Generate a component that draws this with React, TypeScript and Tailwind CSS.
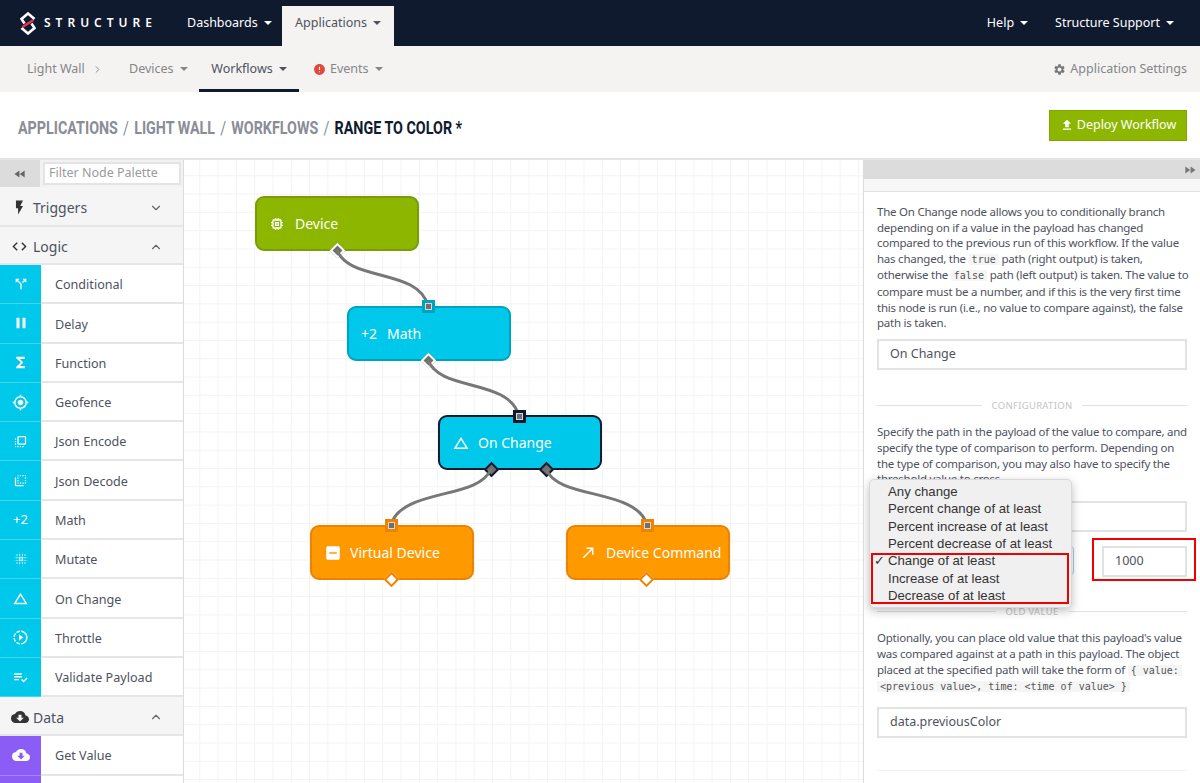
import { ChevronDown, ChevronUp, ChevronRight } from "lucide-react";
import {
  MdCallMade,
  MdCallSplit,
  MdChangeHistory,
  MdBlurOn,
  MdCloudDownload,
  MdCode,
  MdError,
  MdFastForward,
  MdFastRewind,
  MdFileUpload,
  MdFlashOn,
  MdFlipToBack,
  MdFlipToFront,
  MdFunctions,
  MdGpsFixed,
  MdIndeterminateCheckBox,
  MdMemory,
  MdPause,
  MdPlaylistAddCheck,
  MdSettings,
  MdSlowMotionVideo,
} from "react-icons/md";
import type { ReactNode } from "react";

const sans = "font-['Noto_Sans','Open_Sans',sans-serif]";

function Caret() {
  return <span className="ml-[6px] inline-block border-x-[4px] border-t-[4px] border-x-transparent border-t-current align-middle" />;
}

function Logo() {
  return (
    <svg width="16" height="23" viewBox="0 0 16 23" className="shrink-0" fill="none" strokeWidth="2.6">
      <path d="M4.5 11.5 L1.5 7 L8 1.5 L14.5 7" stroke="#fff" />
      <path d="M11.5 11.5 L14.5 16 L8 21.5 L1.5 16" stroke="#fff" />
      <path d="M2.5 15 L13.5 8" stroke="#e8334a" />
    </svg>
  );
}

const logicItems: { label: string; icon: ReactNode }[] = [
  { label: "Conditional", icon: <MdCallSplit size={16} /> },
  { label: "Delay", icon: <MdPause size={18} /> },
  { label: "Function", icon: <MdFunctions size={17} /> },
  { label: "Geofence", icon: <MdGpsFixed size={17} /> },
  { label: "Json Encode", icon: <MdFlipToFront size={15} /> },
  { label: "Json Decode", icon: <MdFlipToBack size={15} /> },
  { label: "Math", icon: <span className="text-[13px] text-white">+2</span> },
  { label: "Mutate", icon: <MdBlurOn size={16} /> },
  { label: "On Change", icon: <MdChangeHistory size={17} /> },
  { label: "Throttle", icon: <MdSlowMotionVideo size={17} /> },
  { label: "Validate Payload", icon: <MdPlaylistAddCheck size={17} /> },
];

function PaletteRow({ label, icon, color }: { label: string; icon: ReactNode; color: string }) {
  return (
    <div className="flex h-[39.3px] shrink-0 bg-white">
      <div className={`flex w-[41px] shrink-0 items-center justify-center border-b border-white/25 text-white ${color}`}>{icon}</div>
      <span className="flex flex-1 items-center border-b-2 border-[#e6e6e6] pl-[14px] pt-[4px] text-[12.6px] text-[#4e5260]">{label}</span>
    </div>
  );
}

function PaletteHeader({ label, icon, open, height }: { label: string; icon: ReactNode; open?: boolean; height: string }) {
  return (
    <div className={`flex shrink-0 items-center border-b-2 border-[#e6e6e6] bg-[#f5f5f5] pr-[20px] pt-[3px] text-[#4e5260] ${height}`}>
      <span className="flex w-[33px] justify-center pl-[6px] text-[#333]">{icon}</span>
      <span className="flex-1 text-[14px]">{label}</span>
      {open ? <ChevronUp size={14} className="text-[#666]" /> : <ChevronDown size={14} className="text-[#666]" />}
    </div>
  );
}

function Sidebar() {
  return (
    <aside className="flex w-[184px] shrink-0 flex-col overflow-hidden border-r border-[#dcdcdc] bg-white">
      <div className="flex h-[27px] shrink-0 bg-[#dcdcdc]">
        <div className="flex w-[40px] items-center justify-center text-[#666]"><MdFastRewind size={14} /></div>
        <div className="flex-1 bg-[#f2f2f2] py-[2px] pl-[3px] pr-[2px]">
          <div className="flex h-full items-center border-2 border-[#e4e4e4] bg-white pl-[4px] text-[12.5px] text-[#9a9a9a]">Filter Node Palette</div>
        </div>
      </div>
      <PaletteHeader label="Triggers" icon={<MdFlashOn size={17} />} height="h-[40px]" />
      <PaletteHeader label="Logic" icon={<MdCode size={17} />} height="h-[38px]" open />
      {logicItems.map((item) => (
        <PaletteRow key={item.label} {...item} color="bg-[#00c8ea]" />
      ))}
      <PaletteHeader label="Data" icon={<MdCloudDownload size={18} />} height="h-[39px]" open />
      <PaletteRow label="Get Value" icon={<MdCloudDownload size={18} />} color="bg-[#8b5cf6]" />
      <PaletteRow label="" icon={null} color="bg-[#8b5cf6]" />
    </aside>
  );
}

function InPort({ x, y, border }: { x: number; y: number; border: string }) {
  return (
    <div className={`absolute h-[13px] w-[13px] border-[3px] ${border}`} style={{ left: x - 6.5, top: y - 6.5 }}>
      <div className="h-full w-full border border-[#d8d8d8] bg-[#6f6f6f]" />
    </div>
  );
}

function OutPort({ x, y, border, fill }: { x: number; y: number; border: string; fill: string }) {
  return <div className={`absolute h-[11px] w-[11px] rotate-45 border-2 ${border} ${fill}`} style={{ left: x - 5.5, top: y - 5.5 }} />;
}

function Node({ x, y, label, icon, tone }: { x: number; y: number; label: string; icon: ReactNode; tone: string }) {
  return (
    <div className={`absolute flex h-[55px] w-[164px] items-center rounded-[9px] pl-[12px] text-[14px] text-white ${tone}`} style={{ left: x, top: y }}>
      <span className="flex w-[26px] shrink-0 items-center">{icon}</span>
      <span>{label}</span>
    </div>
  );
}

function Canvas() {
  return (
    <main className="relative flex-1 overflow-hidden bg-white bg-[linear-gradient(#f3f3f3_1px,transparent_1px),linear-gradient(90deg,#f3f3f3_1px,transparent_1px)] bg-[size:18.3px_18.3px] bg-[position:-3px_-3px]">
      <Node x={71} y={36} label="Device" tone="bg-[#8db600] border-2 border-[#7a9c06]" icon={<MdMemory size={16} />} />
      <Node x={163} y={146} label="Math" tone="bg-[#00c8ea] border-2 border-[#00a3bf]" icon={<span className="text-[14px]">+2</span>} />
      <Node x={254} y={255} label="On Change" tone="bg-[#00c8ea] border-[2.5px] border-[#101a2e]" icon={<MdChangeHistory size={18} />} />
      <Node x={126} y={365} label="Virtual Device" tone="bg-[#ff9900] border-2 border-[#ef8300]" icon={<MdIndeterminateCheckBox size={18} />} />
      <Node x={382} y={365} label="Device Command" tone="bg-[#ff9900] border-2 border-[#ef8300]" icon={<MdCallMade size={17} />} />

      <OutPort x={153} y={90} border="border-white" fill="bg-[#6f6f6f]" />
      <OutPort x={244} y={200} border="border-white" fill="bg-[#6f6f6f]" />
      <OutPort x={307} y={309} border="border-[#101a2e]" fill="bg-[#6f6f6f]" />
      <OutPort x={362} y={309} border="border-[#101a2e]" fill="bg-[#6f6f6f]" />
      <OutPort x={207} y={419} border="border-[#ef8300]" fill="bg-white" />
      <OutPort x={462} y={419} border="border-[#ef8300]" fill="bg-white" />

      <svg className="absolute inset-0" width="680" height="623" fill="none" stroke="#777" strokeWidth="3">
        <path d="M153 90 C165 122 235 108 244 146" />
        <path d="M244 200 C256 232 325 218 335 256" />
        <path d="M307 309 C295 340 217 328 207 365" />
        <path d="M362 309 C374 340 453 328 463 365" />
      </svg>

      <InPort x={244} y={146} border="border-[#00a3bf]" />
      <InPort x={335} y={256} border="border-[#101a2e]" />
      <InPort x={207} y={365} border="border-[#ef8300]" />
      <InPort x={463} y={365} border="border-[#ef8300]" />
    </main>
  );
}

function Code({ children }: { children: ReactNode }) {
  return <code className="bg-[#f5f5f5] px-[3px] font-['DejaVu_Sans_Mono',monospace] text-[10px] tracking-normal text-[#555]">{children}</code>;
}

function Field({ value, className }: { value?: string; className?: string }) {
  return <div className={`flex h-[31px] items-center border-2 border-[#e2e2e2] bg-white pl-[11px] text-[12.5px] tracking-normal text-[#4e5260] ${className ?? ""}`}>{value}</div>;
}

function Divider({ label }: { label: string }) {
  return (
    <div className="flex items-center gap-[10px] text-[9.5px] tracking-[0.3px] text-[#c4c4c4]">
      <div className="h-[1px] flex-1 bg-[#e2e2e2]" />
      {label}
      <div className="h-[1px] flex-1 bg-[#e2e2e2]" />
    </div>
  );
}

const options = ["Any change", "Percent change of at least", "Percent increase of at least", "Percent decrease of at least", "Change of at least", "Increase of at least", "Decrease of at least"];

function Panel() {
  return (
    <aside className="relative flex w-[337px] shrink-0 flex-col overflow-hidden border-l border-[#dcdcdc] bg-white text-[11.5px] leading-[15.6px] tracking-[-0.24px] text-[#4e5260]">
      <div className="flex h-[19px] shrink-0 items-center justify-end bg-[#dcdcdc] pr-[3px] text-[#777]"><MdFastForward size={14} /></div>
      <div className="h-[13px] shrink-0 border-b border-[#e2e2e2] bg-[#f7f7f7]" />
      <div className="px-[13px] pt-[12px]">
        <p className="whitespace-nowrap">
          The On Change node allows you to conditionally branch<br />
          depending on if a value in the payload has changed<br />
          compared to the previous run of this workflow. If the value<br />
          has changed, the <Code>true</Code> path (right output) is taken,<br />
          otherwise the <Code>false</Code> path (left output) is taken. The value to<br />
          compare must be a number, and if this is the very first time<br />
          this node is run (i.e., no value to compare against), the false<br />
          path is taken.
        </p>
        <Field value="On Change" className="mt-[8px]" />
        <div className="mt-[28px]"><Divider label="CONFIGURATION" /></div>
        <p className="mt-[11px]">
          Specify the path in the payload of the value to compare, and specify the type of comparison to perform. Depending on the type of comparison, you may also have to specify the threshold value to cross.
        </p>
        <Field className="mt-[14px]" />
        <div className="mt-[14px] flex justify-end">
          <Field value="1000" className="w-[85px]" />
        </div>
        <div className="mt-[27px]"><Divider label="OLD VALUE" /></div>
        <p className="mt-[11px]">
          Optionally, you can place old value that this payload's value was compared against at a path in this payload. The object placed at the specified path will take the form of <Code>{"{ value:"}</Code> <Code>{"<previous value>, time: <time of value> }"}</Code>
        </p>
        <Field value="data.previousColor" className="mt-[12px]" />
        <div className="mt-[32px] h-[1px] bg-[#f2f2f2]" />
      </div>

      <div className="absolute left-[206px] top-[386px] h-[29px] w-[4px] rounded-r-[4px] border-r border-[#9cc9ee]" />
      <div className="absolute left-[228px] top-[378px] h-[43px] w-[104px] border-2 border-[#f00000]" />
      <div className="absolute left-[5px] top-[319px] w-[203px] rounded-[5px] border border-[#d8d8d8] bg-[#f0f0f0] py-[3px] font-['Liberation_Sans',sans-serif] text-[13.2px] leading-[17.35px] tracking-normal text-[#333] shadow-[0_3px_10px_rgba(0,0,0,0.25)]">
        {options.map((o) => (
          <div key={o} className="relative whitespace-nowrap pl-[18px]">
            {o === "Change of at least" && <span className="absolute left-[4px]">✓</span>}
            {o}
          </div>
        ))}
        <div className="absolute left-[1px] top-[73px] h-[51px] w-[198px] border-2 border-[#f00000]" />
      </div>
    </aside>
  );
}

export default function App() {
  return (
    <div className={`flex h-[783px] w-[1200px] flex-col overflow-hidden bg-white ${sans}`}>
      <header className="flex h-[46px] shrink-0 items-stretch bg-[#101a2e] text-[12.5px] text-white">
        <div className="flex w-[187px] items-center pl-[20px]">
          <Logo />
          <span className="ml-[8px] text-[12px] font-semibold tracking-[5px]">STRUCTURE</span>
        </div>
        <div className="flex w-[95px] items-center">Dashboards<Caret /></div>
        <div className="mt-[6px] flex w-[112px] items-center justify-center bg-[#f4f3f1] pb-[6px] text-[#4e5260]">Applications<Caret /></div>
        <div className="flex-1" />
        <div className="flex items-center pr-[27px]">Help<Caret /></div>
        <div className="flex items-center pr-[26px]">Structure Support<Caret /></div>
      </header>

      <nav className="flex h-[46px] shrink-0 items-stretch bg-[#f4f3f1] text-[12.5px] text-[#85858a]">
        <div className="flex w-[129px] items-center pl-[27px]">Light Wall<ChevronRight size={11} className="ml-[7px]" /></div>
        <div className="flex w-[70px] items-center">Devices<Caret /></div>
        <div className="flex w-[100px] items-center justify-center border-b-[3px] border-[#101a2e] pt-[3px] text-[#4e5260]">Workflows<Caret /></div>
        <div className="flex items-center pl-[14px]">
          <MdError size={13} className="mr-[4px] text-[#e2483d]" />
          Events<Caret />
        </div>
        <div className="flex-1" />
        <div className="flex items-center gap-[4px] pr-[13px]"><MdSettings size={13} className="text-[#777]" />Application Settings</div>
      </nav>

      <div className="flex h-[68px] shrink-0 items-center justify-between border-b-2 border-[#e6e6e6] pl-[18px] pr-[13px]">
        <h1 className="origin-left scale-x-[0.795] whitespace-nowrap pt-[5px] font-['Roboto',sans-serif] text-[18px] font-bold text-[#8a8d98]">
          APPLICATIONS <span className="mx-[2px] font-normal">/</span> LIGHT WALL <span className="mx-[2px] font-normal">/</span> WORKFLOWS <span className="mx-[2px] font-normal">/</span> <span className="text-[#101a2e]">RANGE TO COLOR *</span>
        </h1>
        <button type="button" className="flex h-[31px] w-[138px] items-center justify-center gap-[3px] border border-[#7fa600] bg-[#8db600] text-[12.5px] text-white">
          <MdFileUpload size={14} />Deploy Workflow
        </button>
      </div>

      <div className="flex min-h-0 flex-1">
        <Sidebar />
        <Canvas />
        <Panel />
      </div>
    </div>
  );
}
